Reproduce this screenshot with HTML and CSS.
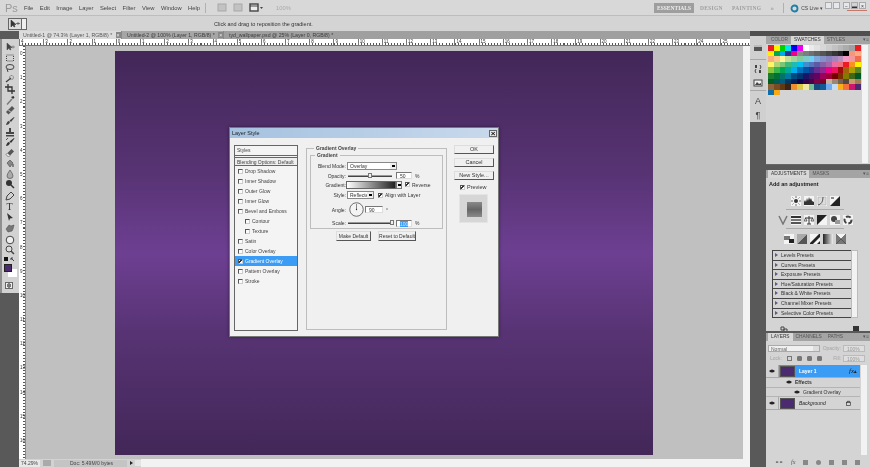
FILE: index.html
```html
<!DOCTYPE html>
<html lang="en">
<head>
    <meta charset="UTF-8">
    <title>Layer Style</title>
    <link rel="stylesheet" href="styles.css">
</head>
<body>
<div class="app">
    <div class="menubar">
        <span class="ps-logo">Ps</span>
        <nav class="menu">
            <span>File</span><span>Edit</span><span>Image</span><span>Layer</span><span>Select</span><span>Filter</span><span>View</span><span>Window</span><span>Help</span>
        </nav>
        <div class="app-tools">
            <i class="sep"></i>
            <svg class="app-first" width="10" height="9" viewBox="0 0 10 9"><rect x="1" y="1" width="8" height="7" fill="#c2c2c2" stroke="#a8a8a8"/></svg>
            <svg width="10" height="9" viewBox="0 0 10 9"><rect x="1" y="1" width="8" height="7" fill="#c2c2c2" stroke="#a8a8a8"/></svg>
            <svg width="14" height="9" viewBox="0 0 14 9"><rect x="1" y="1" width="8" height="7" fill="#eee" stroke="#444" stroke-width="1.4"/><path d="M1 3h8" stroke="#444"/><path d="M11 4h3l-1.500 2z" fill="#444"/></svg>
            <span class="zoom-pct">100%</span>
        </div>
        <div class="workspaces">
            <span class="ws-active">ESSENTIALS</span><span>DESIGN</span><span>PAINTING</span><span class="ws-more">&raquo;</span>
            <i class="sep"></i>
            <svg width="9" height="9" viewBox="0 0 9 9"><circle cx="4.500" cy="4.500" r="3" fill="none" stroke="#1c7fa8" stroke-width="1.800"/></svg>
            <span class="cs-live">CS Live &#9662;</span>
        </div>
        <div class="winbtns">
            <span class="winbtn"></span><span class="winbtn winbtn-gap"></span><span class="winbtn">&minus;</span><span class="winbtn winbtn-max">&#9644;</span><span class="winbtn">&times;</span>
            <i class="win-underline"></i>
        </div>
    </div>

    <div class="optionsbar">
        <span class="tool-preset">
            <svg width="10" height="8" viewBox="0 0 10 8"><path d="M1 0v7l2-2 1 2 1-.5-1-2h2zM6 3.500h4M8 2v3" fill="#333" stroke="#333" stroke-width=".6"/></svg>
            <b class="preset-drop"></b>
        </span>
        <span class="hint">Click and drag to reposition the gradient.</span>
    </div>

    <div class="workspace">
        <aside class="toolbox">
            <div class="tool-top"></div>
            <div class="tools">
                <svg class="tool" viewBox="0 0 10 10"><path d="M2 1v7l2-2 1 2 1-.5-1-2h2zM6 5h4M8 3.500v3" fill="#444" stroke="#444" stroke-width=".5"/></svg>
                <svg class="tool" viewBox="0 0 10 10"><rect x="1.500" y="2" width="7" height="6" fill="none" stroke="#444" stroke-dasharray="1 1"/></svg>
                <svg class="tool" viewBox="0 0 10 10"><ellipse cx="5" cy="4" rx="4" ry="2.500" fill="none" stroke="#444"/><path d="M2 6l1 3" stroke="#444"/></svg>
                <svg class="tool" viewBox="0 0 10 10"><path d="M1 8l5-4" stroke="#444" stroke-width="1.500"/><circle cx="6.500" cy="3.500" r="2" fill="none" stroke="#666" stroke-dasharray="1 .6"/></svg>
                <svg class="tool" viewBox="0 0 10 10"><path d="M3 0v7h7M0 3h7v7" fill="none" stroke="#333" stroke-width="1.300"/></svg>
                <svg class="tool" viewBox="0 0 10 10"><path d="M1.500 9l5-5.500 1 1L2.500 10z" fill="#777"/><path d="M6 2l2 2 1.500-1.500-1-1.500z" fill="#333"/></svg>
                <svg class="tool tool-gap" viewBox="0 0 10 10"><path d="M1 7l6-6 2.500 2.500-6 6z" fill="#555"/><path d="M3.500 5l2 2" stroke="#ddd"/></svg>
                <svg class="tool" viewBox="0 0 10 10"><path d="M1 9q1-4 3-4l1 1q-1 3-4 3zM4.500 4.500L9 1l.5.500L6 6z" fill="#444"/></svg>
                <svg class="tool" viewBox="0 0 10 10"><path d="M4 1h2v4h3v2H1V5h3zM1 8h8v1.500H1z" fill="#444"/></svg>
                <svg class="tool" viewBox="0 0 10 10"><path d="M1 9q1-4 3-4l1 1q-1 3-4 3zM4.500 4.500L9 1l.5.500L6 6z" fill="#333"/><path d="M1 3l2-2" stroke="#555"/></svg>
                <svg class="tool" viewBox="0 0 10 10"><path d="M1 6.500L6.500 1 9 3.500 3.500 9z" fill="#555"/><path d="M1 6.500L3.500 9 5 7.500 2.500 5z" fill="#eee" stroke="#555" stroke-width=".5"/></svg>
                <svg class="tool" viewBox="0 0 10 10"><path d="M2 5l3-3 3 3-3 4z" fill="#888" stroke="#444" stroke-width=".6"/><path d="M8 6v3" stroke="#333"/></svg>
                <svg class="tool" viewBox="0 0 10 10"><path d="M5 1Q2 5 2 7a3 2.500 0 0 0 6 0Q8 5 5 1z" fill="#aaa" stroke="#555" stroke-width=".7"/></svg>
                <svg class="tool tool-line" viewBox="0 0 10 10"><circle cx="4" cy="4" r="3" fill="#333"/><path d="M6 6l3 3" stroke="#333" stroke-width="1.500"/></svg>
                <svg class="tool" viewBox="0 0 10 10"><path d="M1 9l1-4 4-4 3 3-4 4z" fill="none" stroke="#444"/></svg>
                <span class="tool tool-type">T</span>
                <svg class="tool" viewBox="0 0 10 10"><path d="M2 1l6 5-3 .5L4 9z" fill="#333"/></svg>
                <svg class="tool tool-line" viewBox="0 0 10 10"><path d="M1 6l3-4 2 1 3-1-1 4-1 2-4 1z" fill="#777" stroke="#444" stroke-width=".5"/></svg>
                <svg class="tool" viewBox="0 0 10 10"><circle cx="5" cy="5" r="3.800" fill="#eee" stroke="#444"/></svg>
                <svg class="tool" viewBox="0 0 10 10"><circle cx="4" cy="4" r="3" fill="#ddd" stroke="#444"/><path d="M6 6l3 3" stroke="#444" stroke-width="1.500"/></svg>
            </div>
            <div class="mini-colors">
                <svg width="11" height="6" viewBox="0 0 11 6"><rect x="0" y="0" width="4" height="4" fill="#111"/><path d="M7 1l3 3M7 1v2M7 1h2" stroke="#444" fill="none"/></svg>
            </div>
            <div class="colors"><span class="bg-chip"></span><span class="fg-chip"></span></div>
            <div class="quickmask"><span></span></div>
            <div class="tool-empty"></div>
        </aside>

        <main class="docarea">
            <div class="tabs">
                <span class="tab tab-active">Untitled-1 @ 74.3% (Layer 1, RGB/8) * <b>&times;</b></span>
                <span class="tab">Untitled-2 @ 100% (Layer 1, RGB/8) * <b>&times;</b></span>
                <span class="tab tab-last">tyd_wallpaper.psd @ 25% (Layer 0, RGB/8) *</span>
            </div>
            <div class="ruler-h" id="rulerH"></div>
            <div class="docbody">
                <div class="ruler-v" id="rulerV"></div>
                <div class="canvas"><div class="artboard"></div></div>
                <div class="vscroll"><b></b></div>
            </div>
            <div class="statusbar">
                <span class="status-zoom">74.29%</span>
                <span class="status-icon"></span>
                <span class="status-doc">Doc: 5.49M/0 bytes</span>
                <b class="status-arrow"></b>
                <span class="status-box"></span>
                <span class="status-scroll"></span>
            </div>
        </main>

        <aside class="dock">
            <div class="dock-icons">
                <div class="dock-group">
                    <svg viewBox="0 0 10 10"><rect x="1" y="2" width="8" height="6" fill="#555"/><path d="M1 2h8v2H1z" fill="#bbb"/></svg>
                </div>
                <div class="dock-group dock-group2">
                    <svg viewBox="0 0 10 10"><path d="M2 1h2v3H2zM6 6h2v3H6z" fill="#444"/><path d="M7 1q2 2 0 4M3 9Q1 7 3 5" stroke="#444" fill="none"/></svg>
                    <svg viewBox="0 0 10 10"><rect x="1" y="2" width="8" height="6" fill="#eee" stroke="#444"/><path d="M2 7l2-3 2 2 2-1v2z" fill="#444"/></svg>
                </div>
                <div class="dock-group dock-group3">
                    <span class="dock-glyph">A</span>
                    <span class="dock-glyph">&para;</span>
                </div>
            </div>
            <div class="panels">
                <section class="panel panel-swatches">
                    <div class="panel-tabs">
                        <span>COLOR</span><span class="on">SWATCHES</span><span>STYLES</span><em>&#9662;&equiv;</em>
                    </div>
                    <div class="swatch-body">
                        <div class="swatches" id="swatches"></div>
                        <div class="panel-scroll"></div>
                    </div>
                </section>

                <section class="panel panel-adjust">
                    <div class="panel-tabs">
                        <span class="on">ADJUSTMENTS</span><span>MASKS</span><em>&#9662;&equiv;</em>
                    </div>
                    <p class="adjust-title">Add an adjustment</p>
                    <div class="adj-row">
                        <svg class="adj" viewBox="0 0 10 10"><circle cx="5" cy="5" r="2" fill="#333"/><path d="M5 0v2M5 8v2M0 5h2M8 5h2M1.500 1.500l1 1M7.500 7.500l1 1M8.500 1.500l-1 1M2.500 7.500l-1 1" stroke="#333" stroke-width=".7"/></svg>
                        <svg class="adj" viewBox="0 0 10 10"><path d="M0 9V6l1-2 1 2 1-4 1 3 1-4 1 3 1-2 1 3 2 1v3z" fill="#333"/></svg>
                        <svg class="adj" viewBox="0 0 10 10"><path d="M1 1h8v8H1z" fill="#ddd" stroke="#999" stroke-width=".5"/><path d="M1 9Q6 8 6 1" fill="none" stroke="#555"/></svg>
                        <svg class="adj" viewBox="0 0 10 10"><path d="M0 10L10 0v10z" fill="#222"/><path d="M1 2h3" stroke="#222"/></svg>
                    </div>
                    <i class="adj-line"></i>
                    <div class="adj-row">
                        <svg class="adj adj-plain" viewBox="0 0 10 10"><path d="M1 1l4 8 4-8" fill="none" stroke="#777" stroke-width="1.500"/></svg>
                        <svg class="adj" viewBox="0 0 10 10"><path d="M0 1h10v2H0z" fill="#333"/><path d="M0 4h10v2H0z" fill="#777"/><path d="M0 7h10v2H0z" fill="#555"/></svg>
                        <svg class="adj" viewBox="0 0 10 10"><path d="M5 1v8M1 3h8M3 9h4" stroke="#333"/><path d="M0 6l1.500-3L3 6zM7 6l1.500-3L10 6z" fill="none" stroke="#333" stroke-width=".7"/></svg>
                        <svg class="adj" viewBox="0 0 10 10"><path d="M0 0h10L0 10z" fill="#222"/></svg>
                        <svg class="adj" viewBox="0 0 10 10"><circle cx="4" cy="4" r="3" fill="#444"/><rect x="5" y="5" width="5" height="4" fill="#999"/></svg>
                        <svg class="adj" viewBox="0 0 10 10"><circle cx="5" cy="5" r="3.500" fill="none" stroke="#444" stroke-width="2" stroke-dasharray="5 2"/></svg>
                    </div>
                    <i class="adj-line"></i>
                    <div class="adj-row adj-row3">
                        <svg class="adj" viewBox="0 0 10 10"><path d="M0 2h6v4H0z" fill="#777"/><path d="M5 5h5v4H5z" fill="#222"/></svg>
                        <svg class="adj" viewBox="0 0 10 10"><path d="M0 10L10 0v10z" fill="#555"/><path d="M0 0h10L0 10z" fill="#aaa"/></svg>
                        <svg class="adj" viewBox="0 0 10 10"><path d="M0 9L9 0h1v3L3 10H0z" fill="#222"/><path d="M7 10l3-3v3z" fill="#222"/></svg>
                        <svg class="adj adj-grad" viewBox="0 0 10 10"><rect width="10" height="10" fill="none"/></svg>
                        <svg class="adj" viewBox="0 0 10 10"><path d="M0 0l5 5 5-5v10H0z" fill="#777"/><path d="M0 0l10 10M10 0L0 10" stroke="#333" stroke-width=".5"/></svg>
                    </div>
                    <div class="presets">
                        <ul class="preset-list">
                            <li>Levels Presets</li>
                            <li>Curves Presets</li>
                            <li>Exposure Presets</li>
                            <li>Hue/Saturation Presets</li>
                            <li>Black &amp; White Presets</li>
                            <li>Channel Mixer Presets</li>
                            <li>Selective Color Presets</li>
                        </ul>
                        <div class="preset-scroll"></div>
                    </div>
                    <div class="panel-foot">
                        <svg width="8" height="6" viewBox="0 0 8 6"><path d="M1 1h3v3H1zM4 3h3v3H4z" fill="none" stroke="#444"/></svg>
                        <svg width="8" height="6" viewBox="0 0 8 6"><path d="M1 0h6v6H1z" fill="#333"/></svg>
                    </div>
                </section>

                <section class="panel panel-layers">
                    <div class="panel-tabs">
                        <span class="on">LAYERS</span><span>CHANNELS</span><span>PATHS</span><em>&#9662;&equiv;</em>
                    </div>
                    <div class="layer-opts">
                        <span class="blend-box">Normal<b></b></span>
                        <span class="dim">Opacity:</span><span class="num-box">100%</span>
                    </div>
                    <div class="layer-opts layer-lock">
                        <span class="dim">Lock:</span>
                        <i class="lock-box"></i><i class="lock-box lock-small"></i><i class="lock-box lock-small"></i><i class="lock-box lock-small"></i>
                        <span class="dim lock-fill">Fill:</span><span class="num-box">100%</span>
                    </div>
                    <div class="layer-area">
                        <div class="layer-list">
                            <div class="layer layer-sel">
                                <span class="eye"><svg viewBox="0 0 8 5"><path d="M0 2.500Q4-1.500 8 2.500 4 6.500 0 2.500z" fill="#222"/></svg></span>
                                <div class="layer-main">
                                    <span class="thumb"></span>
                                    <span class="layer-name">Layer 1</span>
                                    <span class="fx">fx</span><b class="fx-arrow">&#9652;</b>
                                </div>
                            </div>
                            <div class="effect">
                                <span class="eye eye-1"><svg viewBox="0 0 8 5"><path d="M0 2.500Q4-1.500 8 2.500 4 6.500 0 2.500z" fill="#222"/></svg></span>
                                <strong>Effects</strong>
                            </div>
                            <div class="effect">
                                <span class="eye eye-2"><svg viewBox="0 0 8 5"><path d="M0 2.500Q4-1.500 8 2.500 4 6.500 0 2.500z" fill="#222"/></svg></span>
                                Gradient Overlay
                            </div>
                            <div class="layer">
                                <span class="eye"><svg viewBox="0 0 8 5"><path d="M0 2.500Q4-1.500 8 2.500 4 6.500 0 2.500z" fill="#222"/></svg></span>
                                <div class="layer-main">
                                    <span class="thumb"></span>
                                    <span class="layer-name layer-bg">Background</span>
                                    <svg class="padlock" viewBox="0 0 6 7"><path d="M1.500 3V1.500h3V3" fill="none" stroke="#333"/><rect x=".5" y="3" width="5" height="3.500" fill="none" stroke="#333" stroke-width=".8"/></svg>
                                </div>
                            </div>
                        </div>
                        <div class="layer-scroll"></div>
                    </div>
                    <div class="layer-foot">
                        <span>&#9901;&#9901;</span><em>fx</em><i></i><i class="round"></i><i></i><i></i><i></i>
                    </div>
                </section>
            </div>
        </aside>
    </div>

    <div class="dialog">
        <div class="dialog-title"><span>Layer Style</span><b class="dialog-close">&times;</b></div>
        <div class="dialog-body">
            <div class="style-list">
                <div class="style-head">Styles</div>
                <div class="style-head style-head2">Blending Options: Default</div>
                <label class="style-row"><i class="cb"></i>Drop Shadow</label>
                <label class="style-row"><i class="cb"></i>Inner Shadow</label>
                <label class="style-row"><i class="cb"></i>Outer Glow</label>
                <label class="style-row"><i class="cb"></i>Inner Glow</label>
                <label class="style-row"><i class="cb"></i>Bevel and Emboss</label>
                <label class="style-row style-sub"><i class="cb"></i>Contour</label>
                <label class="style-row style-sub"><i class="cb"></i>Texture</label>
                <label class="style-row"><i class="cb"></i>Satin</label>
                <label class="style-row"><i class="cb"></i>Color Overlay</label>
                <label class="style-row style-sel"><i class="cb cb-on"></i>Gradient Overlay</label>
                <label class="style-row"><i class="cb"></i>Pattern Overlay</label>
                <label class="style-row"><i class="cb"></i>Stroke</label>
            </div>

            <fieldset class="group-outer">
                <legend>Gradient Overlay</legend>
                <fieldset class="group-inner">
                    <legend>Gradient</legend>
                    <div class="form-row row-blend">
                        <span class="form-label">Blend Mode:</span>
                        <span class="select select-blend">Overlay<b></b></span>
                    </div>
                    <div class="form-row row-opacity">
                        <span class="form-label">Opacity:</span>
                        <span class="slider"><i class="thumb-mid"></i></span>
                        <span class="num">50</span><span class="unit">%</span>
                    </div>
                    <div class="form-row row-gradient">
                        <span class="form-label">Gradient:</span>
                        <span class="gradient-pick"></span><b class="gradient-drop"></b>
                        <i class="cb cb-on cb-rev"></i><span class="cb-text">Reverse</span>
                    </div>
                    <div class="form-row row-style">
                        <span class="form-label">Style:</span>
                        <span class="select select-style">Reflected<b></b></span>
                        <i class="cb cb-on cb-align"></i><span class="cb-text">Align with Layer</span>
                    </div>
                    <div class="form-row row-angle">
                        <span class="form-label">Angle:</span>
                        <svg class="dial" viewBox="0 0 16 16"><circle cx="8" cy="8" r="7.200" fill="#f4f4f4" stroke="#444" stroke-width=".8"/><path d="M8 8V2" stroke="#333" stroke-width=".6"/><circle cx="8" cy="8" r=".7" fill="#333"/></svg>
                        <span class="num num-angle">90</span><span class="unit">&deg;</span>
                    </div>
                    <div class="form-row row-scale">
                        <span class="form-label">Scale:</span>
                        <span class="slider"><i class="thumb-end"></i></span>
                        <span class="num num-sel"><u>100</u></span><span class="unit">%</span>
                    </div>
                </fieldset>
                <div class="group-btns">
                    <span class="btn btn-make">Make Default</span>
                    <span class="btn btn-reset">Reset to Default</span>
                </div>
            </fieldset>

            <div class="dialog-side">
                <span class="btn btn-side">OK</span>
                <span class="btn btn-side">Cancel</span>
                <span class="btn btn-side">New Style...</span>
                <label class="preview-check"><i class="cb cb-on"></i>Preview</label>
                <div class="preview"><span></span></div>
            </div>
        </div>
    </div>
</div>

<script>
    const swatchRows = [
        'ed1c24 fff200 00d000 00e5ee 0000f0 ec00ec ffffff ebebeb e1e1e1 d7d7d7 cccccc c2c2c2 b7b7b7 acacac a0a0a0 ed1c24',
        'fff200 00a651 00aeef 2e3192 ec008c 898989 7d7d7d 707070 626262 555555 464646 363636 262626 000000 f7977a fbad82',
        'f9ad81 fdc68a fff799 c4df9b a3d39c 82ca9c 7accc8 6dcff6 7da7d9 8393ca 8781bd a186be bc8dbf f49ac2 f5989d f26c4f',
        'fff568 acd372 7cc576 3cb878 1cbbb4 00bff3 448ccb 5574b9 5c5aa7 855fa8 a864a8 ee6aa7 f06d7a ed1c24 f7941d fff200',
        '8dc63f 39b54a 00a651 00a99d 00aeef 0072bc 0054a6 2e3192 662d91 92278f ec008c ed145b 9e0b0f a36209 aba000 598527',
        '197b30 007236 00746b 0076a3 004b80 003471 1b1464 440e62 630460 9e005d 9e0039 790000 7b2e00 827b00 406618 005826',
        '005e20 005952 005b7f 003663 002157 0d004c 32004b 4b0049 7b0046 7a0026 c7b299 998675 736357 534741 c69c6d a67c52',
        '8c6239 754c24 603913 3c2415 f18f2c d9ca45 efe8a2 73bd95 17497a 115a97 72aeef c5ddf4 f9ad1b f4703a cd1672 4b2a70',
        '0f6ea8 f9a912'
    ];
    const swatches = document.getElementById('swatches');
    swatchRows.join(' ').split(' ').forEach(color => {
        const cell = document.createElement('span');
        cell.style.background = '#' + color;
        swatches.appendChild(cell);
    });

    // ruler numbers: one inch is 24.2px at this zoom
    const rulerH = document.getElementById('rulerH');
    for (let i = -4; i <= 25; i++) {
        const mark = document.createElement('span');
        mark.textContent = Math.abs(i);
        rulerH.appendChild(mark);
    }
    const rulerV = document.getElementById('rulerV');
    for (let i = 0; i <= 16; i++) {
        const mark = document.createElement('span');
        mark.textContent = i;
        rulerV.appendChild(mark);
    }
</script>
</body>
</html>
```

FILE: styles.css
```css
* {
    box-sizing: border-box;
}
body {
    margin: 0;
    font-family: 'Liberation Sans', Arial, sans-serif;
    font-size: 5px;
    color: #333;
    background: #d4d4d4;
}
.app {
    position: relative;
    width: 870px;
    height: 467px;
    overflow: hidden;
    display: flex;
    flex-direction: column;
    background: #d4d4d4;
    filter: blur(0.3px);
}

/* menu bar */
.menubar {
    height: 15px;
    display: flex;
    align-items: center;
    background: #d8d8d8;
    font-size: 5.800px;
    color: #444;
}
.ps-logo {
    width: 24px;
    padding-left: 5px;
    font-size: 11px;
    color: #9a9a9a;
}
.menu {
    display: flex;
    gap: 6.500px;
    width: 181px;
}
.sep {
    display: block;
    width: 1px;
    height: 10px;
    background: #b0b0b0;
}
.app-tools {
    display: flex;
    align-items: center;
    gap: 6px;
}
.app-first {
    margin-left: 5px;
}
.zoom-pct {
    margin-left: 7px;
    color: #aaa;
}
.workspaces {
    position: absolute;
    left: 654px;
    top: 3px;
    display: flex;
    align-items: center;
    height: 10px;
    gap: 9px;
    font-size: 5.500px;
    letter-spacing: .3px;
    font-family: 'Liberation Serif', serif;
    font-weight: bold;
    color: #a0a0a0;
}
.ws-active {
    width: 40px;
    height: 10px;
    margin-right: -3px;
    line-height: 10px;
    text-align: center;
    letter-spacing: 0;
    color: #eee;
    background: #9e9e9e;
}
.ws-more {
    font-size: 7px;
}
.workspaces svg {
    margin-left: -3px;
}
.cs-live {
    margin-left: -7px;
    font-size: 5px;
    letter-spacing: 0;
    color: #444;
    font-family: 'Liberation Sans', sans-serif;
    font-weight: normal;
}
.winbtns {
    position: absolute;
    left: 825px;
    top: 2px;
    display: flex;
}
.winbtn {
    width: 7px;
    height: 7px;
    margin-right: 1px;
    font-size: 5px;
    line-height: 6px;
    text-align: center;
    color: #333;
    background: #e4e8ec;
    border: 1px solid #aaa;
}
.winbtn-gap {
    margin-right: 3px;
}
.winbtn-max {
    background: #d0d4d8;
}
.win-underline {
    position: absolute;
    left: 22px;
    top: 8px;
    width: 20px;
    height: 1px;
    background: #c8766a;
}

/* options bar */
.optionsbar {
    height: 16px;
    display: flex;
    align-items: center;
    padding-left: 8px;
    background: #d4d4d4;
    border-top: 1px solid #bdbdbd;
    font-size: 5.500px;
    color: #333;
}
.tool-preset {
    display: flex;
    align-items: center;
    width: 19px;
    height: 12px;
    border: 1px solid #666;
    background: #dcdcdc;
    padding-left: 1px;
}
.preset-drop {
    margin-left: 1px;
    width: 5px;
    height: 10px;
    border-left: 1px solid #666;
    background: #eee;
}
.hint {
    margin-left: 187px;
}

/* layout */
.workspace {
    height: 436px;
    display: flex;
}

/* toolbox */
.toolbox {
    width: 19px;
    display: flex;
    flex-direction: column;
    background: #d2d2d2;
    border-left: 2px solid #8f8f8f;
}
.tool-top {
    height: 8px;
    margin-left: -2px;
    background: #5a5a5a;
}
.tools {
    display: flex;
    flex-direction: column;
    align-items: center;
    padding-top: 3px;
    width: 15px;
}
.tool {
    display: block;
    width: 10px;
    height: 10px;
    margin-bottom: .5px;
    flex: none;
    font-family: 'Liberation Serif', serif;
    font-size: 10px;
    line-height: 10px;
    text-align: center;
    color: #333;
}
.tool-gap {
    margin-bottom: 1px;
}
.tool-line {
    margin-bottom: 2px;
}
.mini-colors {
    height: 6px;
    margin-top: 1px;
    padding: 0 0 0 2px;
}
.colors {
    position: relative;
    height: 18px;
}
.fg-chip {
    position: absolute;
    left: 2px;
    top: 1px;
    width: 8px;
    height: 8px;
    background: #4b2a70;
    border: 1px solid #222;
}
.bg-chip {
    position: absolute;
    left: 6px;
    top: 6px;
    width: 9px;
    height: 8px;
    background: #fff;
}
.quickmask {
    height: 12px;
    padding: 1px 0 0 3px;
}
.quickmask span {
    display: block;
    width: 8px;
    height: 7px;
    border: 1px solid #666;
    background: radial-gradient(circle, #777 0 2px, #eee 2.500px);
}
.tool-empty {
    flex: 1;
    margin-left: -2px;
    background: #595959;
}

/* document area */
.docarea {
    width: 731px;
    display: flex;
    flex-direction: column;
}
.tabs {
    height: 8px;
    display: flex;
    background: #9a9a9a;
    font-size: 5.200px;
    line-height: 8px;
    color: #3a3a3a;
}
.tab {
    width: 102px;
    padding-left: 5px;
    white-space: nowrap;
    overflow: hidden;
    background: #a6a6a6;
    border-right: 1px solid #888;
}
.tab b {
    margin-left: 2px;
    padding: 0 1px;
    background: #888;
    color: #eee;
    font-weight: normal;
}
.tab-active {
    width: 103px;
    padding-left: 4px;
    background: #dcdcdc;
    color: #555;
}
.tab-last {
    width: auto;
    flex: 1;
    border: 0;
    background: #9f9f9f;
}
.ruler-h {
    height: 7px;
    display: flex;
    overflow: hidden;
    background:
        repeating-linear-gradient(90deg, #555 0 1px, transparent 1px 3.025px) 0 100% / 100% 2px no-repeat,
        #fff;
    font-size: 4.500px;
    line-height: 5px;
    border-bottom: 1px solid #777;
}
.ruler-h span {
    flex: none;
    width: 24.200px;
    padding-left: 1px;
    color: #333;
    border-left: 1px solid #777;
}
.docbody {
    height: 413px;
    display: flex;
}
.ruler-v {
    width: 7px;
    display: flex;
    flex-direction: column;
    padding-top: 5px;
    overflow: hidden;
    background:
        repeating-linear-gradient(180deg, #555 0 1px, transparent 1px 3.025px) 100% 0 / 2px 100% no-repeat,
        #fff;
    font-size: 4.500px;
    line-height: 5px;
    border-right: 1px solid #888;
}
.ruler-v span {
    flex: none;
    height: 24.200px;
    padding-left: 1px;
    color: #333;
}
.canvas {
    flex: 1;
    padding: 5px 0 0 89px;
    background: #c0c0c0;
}
.artboard {
    width: 538px;
    height: 404px;
    background: linear-gradient(180deg, #432758 0%, #573373 30%, #6d3f92 50%, #573373 70%, #432758 100%);
}
.vscroll {
    width: 7px;
    background: #f2f2f2;
}
.statusbar {
    height: 8px;
    display: flex;
    align-items: center;
    background: #d2d2d2;
    font-size: 5px;
    color: #444;
}
.status-zoom {
    width: 21px;
    height: 7px;
    line-height: 6px;
    padding-left: 2px;
    background: #e8e8e8;
}
.status-icon {
    width: 8px;
    height: 6px;
    margin: 0 3px;
    background: #aaa;
}
.status-doc {
    width: 73px;
    padding-left: 16px;
    height: 7px;
    line-height: 6px;
    background: #c4c4c4;
}
.status-arrow {
    width: 0;
    height: 0;
    margin-left: 3px;
    border-left: 3px solid #222;
    border-top: 2.500px solid transparent;
    border-bottom: 2.500px solid transparent;
}
.status-box {
    width: 6px;
    height: 6px;
    margin-left: 2px;
    background: #e4e4e4;
}
.status-scroll {
    flex: 1;
    height: 8px;
    background: #f2f2f2;
}

/* right dock */
.dock {
    width: 120px;
    display: flex;
    background: #595959;
    border-top: 5px solid #4f4f4f;
}
.dock-icons {
    width: 16px;
    height: 86px;
    display: flex;
    flex-direction: column;
    background: #d0d0d0;
    flex: none;
    overflow: hidden;
}
.dock-group {
    display: flex;
    flex-direction: column;
    align-items: center;
    gap: 4px;
    padding: 7px 0 6px;
    border-bottom: 1px solid #a8a8a8;
}
.dock-group2 {
    padding: 4px 0 2px;
}
.dock-group3 {
    padding: 6px 0 0;
    gap: 5px;
    border-bottom: 0;
}
.dock-group svg {
    width: 10px;
    height: 10px;
}
.dock-glyph {
    font-size: 9px;
    line-height: 9px;
    color: #444;
}
.panels {
    width: 104px;
    display: flex;
    flex-direction: column;
    margin-left: 0;
}
.panel {
    background: #d4d4d4;
    overflow: hidden;
}
.panel-tabs {
    height: 8px;
    display: flex;
    background: #a4a4a4;
    font-size: 4.800px;
    line-height: 8px;
    color: #555;
    padding-left: 2px;
}
.panel-tabs span {
    padding: 0 3px;
}
.panel-tabs .on {
    background: #d8d8d8;
    color: #333;
}
.panel-tabs em {
    margin-left: auto;
    padding-right: 1px;
    font-style: normal;
}
.panel-swatches {
    height: 129px;
    border-bottom: 1px solid #666;
}
.swatch-body {
    display: flex;
    justify-content: space-between;
    padding: 1px 2px 0 2px;
}
.swatches {
    display: grid;
    grid-template-columns: repeat(16, 5.800px);
    grid-auto-rows: 5.600px;
}
.panel-scroll {
    width: 6px;
    height: 118px;
    background: #f4f4f4;
}

/* adjustments */
.panel-adjust {
    height: 161px;
    margin-top: 5px;
    position: relative;
}
.adjust-title {
    margin: 0;
    padding: 3px 0 0 3px;
    height: 13px;
    font-size: 5.500px;
    font-weight: bold;
    color: #222;
}
.adj-row {
    display: flex;
    justify-content: center;
    gap: 3px;
    padding-top: 5px;
    padding-right: 6px;
}
.adj-row3 {
    padding-bottom: 6px;
}
.adj {
    width: 10px;
    height: 10px;
    background: #f4f4f4;
}
.adj-plain {
    background: transparent;
}
.adj-grad {
    background: linear-gradient(90deg, #222, #eee);
}
.adj-line {
    display: block;
    height: 1px;
    margin: 3px 26px 0 20px;
    background: #aaa;
}
.presets {
    display: flex;
    padding-left: 6px;
}
.preset-list {
    list-style: none;
    margin: 0;
    padding: 0;
    width: 79px;
    border-left: 1px solid #444;
}
.preset-list li {
    height: 9.600px;
    line-height: 8.600px;
    padding-left: 8px;
    position: relative;
    border-top: 1px solid #444;
    font-size: 5px;
    color: #333;
}
.preset-list li:last-child {
    border-bottom: 1px solid #444;
    height: 10px;
}
.preset-list li::before {
    content: "";
    position: absolute;
    left: 2px;
    top: 2px;
    border-left: 3px solid #5a5a86;
    border-top: 2.500px solid transparent;
    border-bottom: 2.500px solid transparent;
}
.preset-scroll {
    width: 7px;
    height: 68px;
    background: #f2f2f2;
    border: 1px solid #bbb;
}
.panel-foot {
    display: flex;
    justify-content: space-between;
    padding: 8px 10px 0 14px;
}

/* layers */
.panel-layers {
    flex: 1;
    margin-top: 2px;
    display: flex;
    flex-direction: column;
}
.layer-opts {
    height: 12px;
    display: flex;
    align-items: center;
    padding: 2px 5px 0 2px;
    gap: 2px;
}
.dim {
    color: #a5a5a5;
    margin-left: auto;
}
.blend-box {
    position: relative;
    width: 52px;
    height: 7px;
    padding-left: 2px;
    line-height: 6px;
    background: #f0f0f0;
    border: 1px solid #aaa;
    color: #666;
}
.blend-box b {
    position: absolute;
    right: 0;
    top: 0;
    width: 6px;
    height: 5px;
    background: #ddd;
}
.num-box {
    width: 22px;
    height: 7px;
    line-height: 6px;
    padding-left: 3px;
    color: #999;
    background: #dedede;
    border: 1px solid #bbb;
}
.layer-lock {
    height: 10px;
    padding-top: 0;
    gap: 5px;
    justify-content: flex-start;
}
.layer-lock .dim:first-child {
    margin-left: 2px;
}
.layer-lock .num-box {
    margin-left: -3px;
}
.lock-box {
    width: 5px;
    height: 5px;
    border: 1px solid #777;
}
.lock-small {
    background: #777;
    border-radius: 1px;
}
.lock-fill {
    margin-left: auto;
}
.layer-area {
    flex: 1;
    display: flex;
    padding-top: 2px;
}
.layer-list {
    width: 94px;
}
.layer {
    height: 13px;
    display: flex;
    border-bottom: 1px solid #aaa;
}
.eye {
    width: 12px;
    display: flex;
    align-items: center;
    justify-content: center;
}
.eye svg {
    width: 6px;
    height: 4px;
}
.layer-main {
    flex: 1;
    display: flex;
    align-items: center;
    padding-left: 1px;
    border-left: 1px solid #aaa;
}
.layer-sel .layer-main {
    background: #3a9cf5;
}
.thumb {
    width: 15px;
    height: 11px;
    background: #4b2a70;
    border: 1px solid #555;
}
.layer-name {
    margin-left: 4px;
    font-size: 5px;
    font-weight: bold;
    color: #fff;
}
.layer-bg {
    font-weight: normal;
    font-style: italic;
    color: #222;
}
.fx {
    margin-left: auto;
    font-family: 'Liberation Serif', serif;
    font-size: 7px;
    font-style: italic;
    color: #222;
}
.fx-arrow {
    width: 6px;
    font-size: 5px;
    color: #222;
}
.padlock {
    margin-left: auto;
    margin-right: 9px;
    width: 5px;
    height: 6px;
}
.effect {
    height: 9.500px;
    display: flex;
    align-items: center;
    padding-left: 12px;
    gap: 1px;
    font-size: 5px;
    color: #333;
    border-bottom: 1px solid #b4b4b4;
}
.eye-1 {
    width: 10px;
    margin-left: 6px;
}
.eye-2 {
    width: 10px;
    margin-left: 14px;
}
.layer-scroll {
    width: 6px;
    height: 90px;
    margin-left: 1px;
    background: #f2f2f2;
}
.layer-foot {
    display: flex;
    align-items: center;
    justify-content: flex-start;
    gap: 8px;
    height: 10px;
    padding-left: 9px;
    font-size: 4.500px;
    color: #555;
}
.layer-foot em {
    font-family: 'Liberation Serif', serif;
    font-size: 6px;
}
.layer-foot i {
    width: 5px;
    height: 5px;
    background: #888;
}
.layer-foot .round {
    border-radius: 50%;
}

/* Layer Style dialog */
.dialog {
    position: absolute;
    left: 229px;
    top: 127px;
    width: 270px;
    height: 210px;
    display: flex;
    flex-direction: column;
    background: #f0f0f0;
    border: 1px solid #777;
    box-shadow: 0 0 3px rgba(20, 10, 30, 0.5);
}
.dialog-title {
    height: 10px;
    display: flex;
    align-items: center;
    justify-content: space-between;
    padding: 0 1px 0 2px;
    background: linear-gradient(90deg, #a5c2e0, #c9d9ec);
    font-size: 5.500px;
    color: #222;
}
.dialog-close {
    width: 8px;
    height: 7px;
    line-height: 6px;
    text-align: center;
    font-size: 8px;
    color: #111;
    background: #e8e8e8;
    border: 1px solid #666;
}
.dialog-body {
    flex: 1;
    display: flex;
    padding: 7px 4px 5px 4px;
}
.style-list {
    width: 64px;
    height: 186px;
    flex: none;
    background: #f4f4f4;
    border: 1px solid #666;
    font-size: 5px;
    color: #444;
}
.style-head {
    height: 10px;
    line-height: 8px;
    padding-left: 2px;
    border-bottom: 1px solid #666;
    margin-bottom: 1px;
}
.style-head2 {
    margin-bottom: 0;
    height: 9px;
    background: #eee;
    border-top: 1px solid #666;
}
.style-row {
    height: 10px;
    display: flex;
    align-items: center;
    gap: 2px;
    padding-left: 3px;
}
.style-sub {
    padding-left: 10px;
}
.style-sel {
    background: #3a9cf5;
    color: #fff;
}
.cb {
    display: block;
    flex: none;
    width: 5px;
    height: 5px;
    background: #fbfbfb;
    border: 1px solid;
    border-color: #555 #ccc #ccc #555;
}
.cb-on {
    background: linear-gradient(135deg, #fff 25%, #333 30% 60%, #fff 65%);
}
.group-outer,
.group-inner {
    margin: 0;
    padding: 0;
    min-width: 0;
    border: 1px solid #bdbdbd;
}
.group-outer {
    width: 141px;
    height: 185px;
    margin-left: 8px;
    padding: 0 3px;
}
.group-outer legend,
.group-inner legend {
    margin-left: 4px;
    padding: 0 2px;
    font-size: 5px;
    line-height: 6px;
    font-weight: bold;
    color: #444;
}
.group-inner {
    height: 77px;
    margin-top: 1px;
    padding-top: 3px;
}
.form-row {
    display: flex;
    align-items: center;
    font-size: 5px;
    color: #333;
}
.form-label {
    width: 35px;
    margin-right: 1px;
    flex: none;
    text-align: right;
}
.row-blend {
    height: 10px;
}
.row-opacity,
.row-gradient {
    height: 9px;
}
.row-style {
    height: 12px;
}
.row-angle {
    height: 17px;
}
.row-scale {
    height: 10px;
}
.select {
    position: relative;
    height: 8px;
    padding-left: 2px;
    line-height: 7px;
    background: #fff;
    border: 1px solid #888;
    flex: none;
}
.select b,
.gradient-drop {
    position: absolute;
    right: 0;
    top: 0;
    width: 6px;
    height: 6px;
    background: linear-gradient(#000, #000) center / 3px 2px no-repeat #eee;
}
.select-blend {
    width: 50px;
}
.select-style {
    width: 27px;
    overflow: hidden;
}
.slider {
    position: relative;
    width: 44px;
    height: 2px;
    margin-left: 1px;
    background: #999;
    border-bottom: 1px solid #444;
    flex: none;
}
.thumb-mid,
.thumb-end {
    position: absolute;
    top: -2px;
    width: 4px;
    height: 5px;
    background: #f0f0f0;
    border: 1px solid #777;
}
.thumb-mid {
    left: 20px;
}
.thumb-end {
    right: -2px;
}
.num {
    width: 16px;
    height: 7px;
    margin-left: 4px;
    line-height: 6px;
    padding-left: 3px;
    background: #fff;
    border: 1px solid;
    border-color: #777 #ddd #ddd #777;
    flex: none;
}
.unit {
    margin-left: 3px;
}
.gradient-pick {
    width: 50px;
    height: 8px;
    margin-left: -1px;
    background: linear-gradient(90deg, #fff, #222);
    border: 1px solid #666;
    flex: none;
}
.gradient-drop {
    position: static;
    display: block;
    flex: none;
    height: 8px;
    border: 1px solid #777;
}
.cb-rev {
    margin-left: 3px;
}
.cb-align {
    margin-left: 4px;
}
.cb-text {
    margin-left: 2px;
    white-space: nowrap;
}
.dial {
    width: 15px;
    height: 15px;
    margin-left: 2px;
    flex: none;
}
.num-angle {
    width: 18px;
    margin-left: 1px;
}
.num-sel u {
    text-decoration: none;
    background: #3a9cf5;
    color: #cfe6ff;
}
.group-btns {
    display: flex;
    gap: 7px;
    margin-top: 2px;
    padding-left: 26px;
}
.btn {
    display: block;
    height: 10px;
    line-height: 8px;
    text-align: center;
    font-size: 5px;
    color: #333;
    background: #f0f0f0;
    border: 1px solid;
    border-color: #ddd #555 #555 #ddd;
    white-space: nowrap;
}
.btn-make {
    width: 35px;
}
.btn-reset {
    width: 38px;
}
.dialog-side {
    width: 40px;
    margin-left: 7px;
    display: flex;
    flex-direction: column;
}
.btn-side {
    width: 40px;
    height: 9px;
    line-height: 7px;
    margin-bottom: 4px;
    font-size: 5.500px;
}
.preview-check {
    display: flex;
    align-items: center;
    gap: 2px;
    height: 6px;
    margin: 0 0 4px 6px;
    font-size: 5.500px;
    color: #333;
}
.preview {
    width: 29px;
    height: 29px;
    margin-left: 5px;
    padding: 7px;
    background: #d6d6d6;
    border: 1px solid #e4e4e4;
}
.preview span {
    display: block;
    width: 15px;
    height: 15px;
    background: linear-gradient(#8a8a8a, #666 50%, #8a8a8a);
}
```
